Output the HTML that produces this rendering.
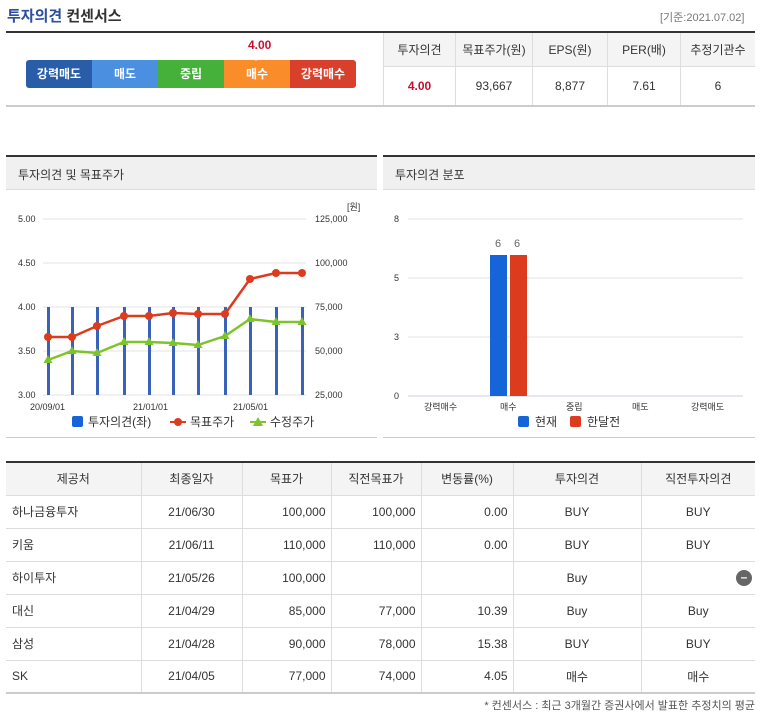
<!DOCTYPE html>
<html><head><meta charset="utf-8"><style>
*{margin:0;padding:0;box-sizing:border-box}
body{width:768px;height:724px;background:#fff;font-family:"Liberation Sans","Noto Sans CJK KR",sans-serif;position:relative;overflow:hidden;color:#333}
.a{position:absolute}
table{border-collapse:collapse;table-layout:fixed}
</style></head><body>
<div class="a" style="left:7px;top:5px;font-size:15px;font-weight:bold;color:#333"><span style="color:#2c4f9e">투자의견</span> 컨센서스</div>
<div class="a" style="left:660px;top:9px;font-size:11px;color:#777">[기준:2021.07.02]</div>
<div class="a" style="left:6px;top:31px;width:749px;height:2px;background:#333"></div>
<div class="a" style="left:6px;top:105px;width:749px;height:2px;background:#ccc"></div>
<div class="a" style="left:248px;top:38px;font-size:12px;font-weight:bold;color:#c8102e">4.00</div>
<div class="a" style="left:251px;top:55px;width:0;height:0;border-left:5px solid transparent;border-right:5px solid transparent;border-top:6px solid #fff;z-index:2"></div>
<div class="a" style="left:26px;top:60px;width:330px;height:28px;border-radius:3px;overflow:hidden;display:flex;color:#fff;font-size:12px;font-weight:bold;text-align:center;line-height:28px">
<div style="width:66px;background:#2a5da8">강력매도</div><div style="width:66px;background:#4a8fe0">매도</div><div style="width:66px;background:#45b03a">중립</div><div style="width:66px;background:#fb8c2a">매수</div><div style="width:66px;background:#d9402c">강력매수</div></div>
<table class="a" style="left:383px;top:33px;width:372px;font-size:12px;text-align:center">
<colgroup><col style="width:72px"><col style="width:77px"><col style="width:75px"><col style="width:73px"><col></colgroup>
<tr style="height:33px;background:#f4f4f4"><td style="border-left:1px solid #ddd">투자의견</td><td style="border-left:1px solid #ddd">목표주가(원)</td><td style="border-left:1px solid #ddd">EPS(원)</td><td style="border-left:1px solid #ddd">PER(배)</td><td style="border-left:1px solid #ddd">추정기관수</td></tr>
<tr style="height:39px;border-top:1px solid #ddd"><td style="border-left:1px solid #ddd;color:#c8102e;font-weight:bold">4.00</td><td style="border-left:1px solid #ddd">93,667</td><td style="border-left:1px solid #ddd">8,877</td><td style="border-left:1px solid #ddd">7.61</td><td style="border-left:1px solid #ddd">6</td></tr></table>

<div class="a" style="left:6px;top:155px;width:371px;height:2px;background:#333"></div>
<div class="a" style="left:6px;top:157px;width:371px;height:33px;background:#f0f0f0;border-bottom:1px solid #ddd;font-size:12px;padding:9px 12px">투자의견 및 목표주가</div>
<div class="a" style="left:6px;top:437px;width:371px;height:1px;background:#ccc"></div>
<div class="a" style="left:383px;top:155px;width:372px;height:2px;background:#333"></div>
<div class="a" style="left:383px;top:157px;width:372px;height:33px;background:#f0f0f0;border-bottom:1px solid #ddd;font-size:12px;padding:9px 12px">투자의견 분포</div>
<div class="a" style="left:383px;top:437px;width:372px;height:1px;background:#ccc"></div>

<svg class="a" style="left:0;top:190px" width="768" height="248" font-family="Liberation Sans,Noto Sans CJK KR,sans-serif" font-size="9" fill="#333">
<g stroke="#e3e3e3"><line x1="43" y1="29" x2="306" y2="29"/><line x1="43" y1="73" x2="306" y2="73"/><line x1="43" y1="117" x2="306" y2="117"/><line x1="43" y1="161" x2="306" y2="161"/><line x1="43" y1="205" x2="306" y2="205"/></g>
<text x="18" y="32">5.00</text><text x="18" y="76">4.50</text><text x="18" y="120">4.00</text><text x="18" y="164">3.50</text><text x="18" y="208">3.00</text>
<text x="315" y="32">125,000</text><text x="315" y="76">100,000</text><text x="315" y="120">75,000</text><text x="315" y="164">50,000</text><text x="315" y="208">25,000</text>
<text x="347" y="20">[원]</text>
<g fill="#3a62b8"><rect x="47" y="117" width="3" height="88"/><rect x="71" y="117" width="3" height="88"/><rect x="96" y="117" width="3" height="88"/><rect x="123" y="117" width="3" height="88"/><rect x="148" y="117" width="3" height="88"/><rect x="172" y="117" width="3" height="88"/><rect x="197" y="117" width="3" height="88"/><rect x="224" y="117" width="3" height="88"/><rect x="249" y="117" width="3" height="88"/><rect x="275" y="117" width="3" height="88"/><rect x="301" y="117" width="3" height="88"/></g>
<polyline fill="none" stroke="#dd3b1e" stroke-width="2.5" points="48,147 72,147 97,136 124,126 149,126 173,123 198,124 225,124 250,89 276,83 302,83"/>
<g fill="#dd3b1e"><circle cx="48" cy="147" r="4"/><circle cx="72" cy="147" r="4"/><circle cx="97" cy="136" r="4"/><circle cx="124" cy="126" r="4"/><circle cx="149" cy="126" r="4"/><circle cx="173" cy="123" r="4"/><circle cx="198" cy="124" r="4"/><circle cx="225" cy="124" r="4"/><circle cx="250" cy="89" r="4"/><circle cx="276" cy="83" r="4"/><circle cx="302" cy="83" r="4"/></g>
<polyline fill="none" stroke="#7cc42a" stroke-width="2.5" points="48,170 72,161 97,163 124,152 149,152 173,153 198,155 225,146 250,129 276,132 302,132"/>
<g fill="#7cc42a"><path d="M48,165l4.5,8h-9z"/><path d="M72,156l4.5,8h-9z"/><path d="M97,158l4.5,8h-9z"/><path d="M124,147l4.5,8h-9z"/><path d="M149,147l4.5,8h-9z"/><path d="M173,148l4.5,8h-9z"/><path d="M198,150l4.5,8h-9z"/><path d="M225,141l4.5,8h-9z"/><path d="M250,124l4.5,8h-9z"/><path d="M276,127l4.5,8h-9z"/><path d="M302,127l4.5,8h-9z"/></g>
<text x="30" y="220">20/09/01</text><text x="133" y="220">21/01/01</text><text x="233" y="220">21/05/01</text>
<rect x="72" y="226" width="11" height="11" rx="2" fill="#1565d8"/><text x="88" y="236" font-size="12">투자의견(좌)</text>
<line x1="170" y1="232" x2="186" y2="232" stroke="#dd3b1e" stroke-width="2"/><circle cx="178" cy="232" r="4" fill="#dd3b1e"/><text x="190" y="236" font-size="12">목표주가</text>
<path d="M258,227l5,9h-10z" fill="#7cc42a"/><line x1="250" y1="232" x2="266" y2="232" stroke="#7cc42a" stroke-width="2"/><text x="270" y="236" font-size="12">수정주가</text>

<g stroke="#e3e3e3"><line x1="408" y1="29" x2="743" y2="29"/><line x1="408" y1="88" x2="743" y2="88"/><line x1="408" y1="147" x2="743" y2="147"/></g>
<line x1="408" y1="206" x2="743" y2="206" stroke="#ccd"/>
<text x="394" y="32">8</text><text x="394" y="91">5</text><text x="394" y="150">3</text><text x="394" y="209">0</text>
<rect x="490" y="65" width="17" height="141" fill="#1565d8"/><rect x="510" y="65" width="17" height="141" fill="#dd3b1e"/>
<text x="495" y="57" font-size="11" fill="#666">6</text><text x="514" y="57" font-size="11" fill="#666">6</text>
<text x="424" y="220">강력매수</text><text x="500" y="220">매수</text><text x="566" y="220">중립</text><text x="632" y="220">매도</text><text x="691" y="220">강력매도</text>
<rect x="518" y="226" width="11" height="11" rx="2" fill="#1565d8"/><text x="535" y="236" font-size="12">현재</text>
<rect x="570" y="226" width="11" height="11" rx="2" fill="#dd3b1e"/><text x="587" y="236" font-size="12">한달전</text>
</svg>

<table class="a" style="left:6px;top:461px;width:749px;font-size:12px;border-top:2px solid #333;border-bottom:2px solid #ccc">
<colgroup><col style="width:135px"><col style="width:101px"><col style="width:89px"><col style="width:90px"><col style="width:92px"><col style="width:128px"><col></colgroup>
<tr style="height:33px;background:#f4f4f4;text-align:center"><td>제공처</td><td style="border-left:1px solid #ddd">최종일자</td><td style="border-left:1px solid #ddd">목표가</td><td style="border-left:1px solid #ddd">직전목표가</td><td style="border-left:1px solid #ddd">변동률(%)</td><td style="border-left:1px solid #ddd">투자의견</td><td style="border-left:1px solid #ddd">직전투자의견</td></tr>
<tbody style="text-align:center">
<tr style="height:33px;border-top:1px solid #ddd"><td style="text-align:left;padding-left:6px">하나금융투자</td><td style="border-left:1px solid #ddd">21/06/30</td><td style="border-left:1px solid #ddd;text-align:right;padding-right:5px">100,000</td><td style="border-left:1px solid #ddd;text-align:right;padding-right:5px">100,000</td><td style="border-left:1px solid #ddd;text-align:right;padding-right:5px">0.00</td><td style="border-left:1px solid #ddd">BUY</td><td style="border-left:1px solid #ddd">BUY</td></tr>
<tr style="height:33px;border-top:1px solid #ddd"><td style="text-align:left;padding-left:6px">키움</td><td style="border-left:1px solid #ddd">21/06/11</td><td style="border-left:1px solid #ddd;text-align:right;padding-right:5px">110,000</td><td style="border-left:1px solid #ddd;text-align:right;padding-right:5px">110,000</td><td style="border-left:1px solid #ddd;text-align:right;padding-right:5px">0.00</td><td style="border-left:1px solid #ddd">BUY</td><td style="border-left:1px solid #ddd">BUY</td></tr>
<tr style="height:33px;border-top:1px solid #ddd"><td style="text-align:left;padding-left:6px">하이투자</td><td style="border-left:1px solid #ddd">21/05/26</td><td style="border-left:1px solid #ddd;text-align:right;padding-right:5px">100,000</td><td style="border-left:1px solid #ddd"></td><td style="border-left:1px solid #ddd"></td><td style="border-left:1px solid #ddd">Buy</td><td style="border-left:1px solid #ddd;text-align:right;padding-right:3px"><span style="display:inline-block;width:16px;height:16px;border-radius:8px;background:#666;color:#fff;line-height:15px;font-weight:bold;text-align:center;vertical-align:middle">–</span></td></tr>
<tr style="height:33px;border-top:1px solid #ddd"><td style="text-align:left;padding-left:6px">대신</td><td style="border-left:1px solid #ddd">21/04/29</td><td style="border-left:1px solid #ddd;text-align:right;padding-right:5px">85,000</td><td style="border-left:1px solid #ddd;text-align:right;padding-right:5px">77,000</td><td style="border-left:1px solid #ddd;text-align:right;padding-right:5px">10.39</td><td style="border-left:1px solid #ddd">Buy</td><td style="border-left:1px solid #ddd">Buy</td></tr>
<tr style="height:33px;border-top:1px solid #ddd"><td style="text-align:left;padding-left:6px">삼성</td><td style="border-left:1px solid #ddd">21/04/28</td><td style="border-left:1px solid #ddd;text-align:right;padding-right:5px">90,000</td><td style="border-left:1px solid #ddd;text-align:right;padding-right:5px">78,000</td><td style="border-left:1px solid #ddd;text-align:right;padding-right:5px">15.38</td><td style="border-left:1px solid #ddd">BUY</td><td style="border-left:1px solid #ddd">BUY</td></tr>
<tr style="height:33px;border-top:1px solid #ddd"><td style="text-align:left;padding-left:6px">SK</td><td style="border-left:1px solid #ddd">21/04/05</td><td style="border-left:1px solid #ddd;text-align:right;padding-right:5px">77,000</td><td style="border-left:1px solid #ddd;text-align:right;padding-right:5px">74,000</td><td style="border-left:1px solid #ddd;text-align:right;padding-right:5px">4.05</td><td style="border-left:1px solid #ddd">매수</td><td style="border-left:1px solid #ddd">매수</td></tr>
</tbody></table>
<div class="a" style="right:13px;top:697px;font-size:11px;color:#555">* 컨센서스 : 최근 3개월간 증권사에서 발표한 추정치의 평균</div>
</body></html>
